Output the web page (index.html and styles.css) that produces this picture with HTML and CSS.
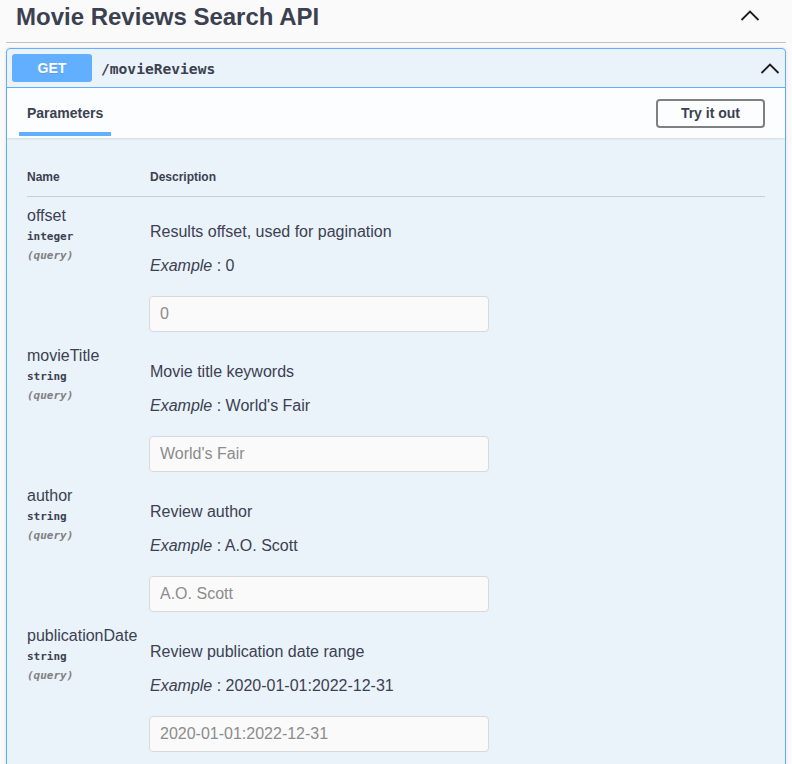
FILE: index.html
```html
<!DOCTYPE html>
<html lang="en">
<head>
<meta charset="utf-8">
<title>Movie Reviews Search API</title>
<link rel="stylesheet" href="styles.css">
</head>
<body>
<div class="page">
  <div class="tag">
    <h3 class="tag-title">Movie Reviews Search API</h3>
    <svg class="tag-arrow" width="20" height="11" viewBox="0 0 20 11"><polyline points="1.5,10 10,1.5 18.5,10" fill="none" stroke="#1b1b1b" stroke-width="1.8"/></svg>
  </div>
  <div class="opblock">
    <div class="summary">
      <span class="method">GET</span>
      <span class="path">/movieReviews</span>
      <svg class="sum-arrow" width="20" height="11" viewBox="0 0 20 11"><polyline points="1.5,10 10,1.5 18.5,10" fill="none" stroke="#1b1b1b" stroke-width="1.8"/></svg>
    </div>
    <div class="section-header">
      <div class="tab">Parameters</div>
      <button class="try">Try it out</button>
    </div>
    <div class="table-container">
      <div class="params-head">
        <div>Name</div>
        <div>Description</div>
      </div>

      <div class="param">
        <div class="p-name-col">
          <div class="p-name">offset</div>
          <div class="p-type">integer</div>
          <div class="p-in">(query)</div>
        </div>
        <div class="p-desc">
          <p>Results offset, used for pagination</p>
          <p><i>Example</i> : 0</p>
          <input class="p-input" type="text" placeholder="0">
        </div>
      </div>

      <div class="param">
        <div class="p-name-col">
          <div class="p-name">movieTitle</div>
          <div class="p-type">string</div>
          <div class="p-in">(query)</div>
        </div>
        <div class="p-desc">
          <p>Movie title keywords</p>
          <p><i>Example</i> : World's Fair</p>
          <input class="p-input" type="text" placeholder="World's Fair">
        </div>
      </div>

      <div class="param">
        <div class="p-name-col">
          <div class="p-name">author</div>
          <div class="p-type">string</div>
          <div class="p-in">(query)</div>
        </div>
        <div class="p-desc">
          <p>Review author</p>
          <p><i>Example</i> : A.O. Scott</p>
          <input class="p-input" type="text" placeholder="A.O. Scott">
        </div>
      </div>

      <div class="param">
        <div class="p-name-col">
          <div class="p-name">publicationDate</div>
          <div class="p-type">string</div>
          <div class="p-in">(query)</div>
        </div>
        <div class="p-desc">
          <p>Review publication date range</p>
          <p><i>Example</i> : 2020-01-01:2022-12-31</p>
          <input class="p-input" type="text" placeholder="2020-01-01:2022-12-31">
        </div>
      </div>
    </div>
  </div>
</div>
</body>
</html>
```

FILE: styles.css
```css
* { box-sizing: border-box; }

body {
  margin: 0;
  background: #fafafa;
  font-family: "Liberation Sans", Arial, sans-serif;
  color: #3b4151;
}

.page {
  padding: 0 6px;
}

.tag {
  display: flex;
  align-items: flex-start;
  padding: 3px 0 11px 10px;
  border-bottom: 1px solid rgba(59, 65, 81, 0.3);
}

.tag-title {
  flex: 1;
  margin: 0;
  font-size: 24px;
  line-height: 28px;
  font-weight: bold;
  color: #3b4151;
}

.tag-arrow {
  margin: 7px 26px 0 0;
  display: block;
}

.opblock {
  margin-top: 5px;
  border: 1px solid #61affe;
  border-radius: 4px;
  background: rgba(97, 175, 254, 0.1);
  box-shadow: 0 0 3px rgba(0, 0, 0, 0.12);
}

.summary {
  display: flex;
  align-items: center;
  padding: 5px;
  border-bottom: 1px solid #61affe;
}

.method {
  width: 80px;
  height: 28px;
  line-height: 28px;
  border-radius: 3px;
  background: #61affe;
  color: #fff;
  font-size: 14px;
  font-weight: bold;
  text-align: center;
  text-shadow: 0 1px 0 rgba(0, 0, 0, 0.1);
}

.path {
  margin-left: 9px;
  font-family: "DejaVu Sans Mono", monospace;
  font-size: 14.6px;
  font-weight: bold;
  color: #3b4151;
}

.sum-arrow {
  margin-left: auto;
  margin-right: 0;
  display: block;
}

.section-header {
  display: flex;
  align-items: center;
  justify-content: space-between;
  height: 50px;
  padding: 0 21px 0 12px;
  background: rgba(255, 255, 255, 0.8);
  box-shadow: 0 1px 2px rgba(0, 0, 0, 0.1);
}

.tab {
  align-self: flex-end;
  margin-bottom: 2px;
  padding: 0 8px 10px;
  border-bottom: 4px solid #61affe;
  font-size: 14px;
  line-height: 17px;
  font-weight: bold;
  color: #3b4151;
}

.try {
  margin-right: -1px;
  padding: 5px 23px;
  border: 2px solid #808080;
  border-radius: 4px;
  background: transparent;
  font-family: "Liberation Sans", Arial, sans-serif;
  font-size: 14px;
  line-height: 15px;
  font-weight: bold;
  color: #3b4151;
}

.table-container {
  padding: 20px;
}

.params-head {
  display: grid;
  grid-template-columns: 122px 1fr;
  padding: 12px 0;
  border-bottom: 1px solid rgba(59, 65, 81, 0.2);
  font-size: 12px;
  line-height: 14px;
  font-weight: bold;
}

.params-head div:last-child {
  padding-left: 1px;
}

.param {
  display: grid;
  grid-template-columns: 122px 1fr;
  padding-top: 10px;
}

.p-name {
  font-size: 16px;
  line-height: 18px;
}

.p-type {
  padding: 5px 0;
  font-family: "DejaVu Sans Mono", monospace;
  font-size: 11px;
  line-height: 14px;
  font-weight: bold;
}

.p-in {
  font-family: "DejaVu Sans Mono", monospace;
  font-size: 11px;
  line-height: 14px;
  font-style: italic;
  font-weight: 600;
  color: #808080;
}

.p-desc p {
  margin: 16px 0 0;
  padding-left: 1px;
  font-size: 16px;
  line-height: 18px;
}

.p-input {
  display: block;
  width: 340px;
  height: 36px;
  margin: 21px 0 5px;
  padding: 0 10px;
  border: 1px solid #d9d9d9;
  border-radius: 4px;
  background: #fafafa;
  font-family: "Liberation Sans", Arial, sans-serif;
  font-size: 16px;
  color: #3b4151;
}

.p-input::placeholder {
  color: #8c8c8c;
}
```
